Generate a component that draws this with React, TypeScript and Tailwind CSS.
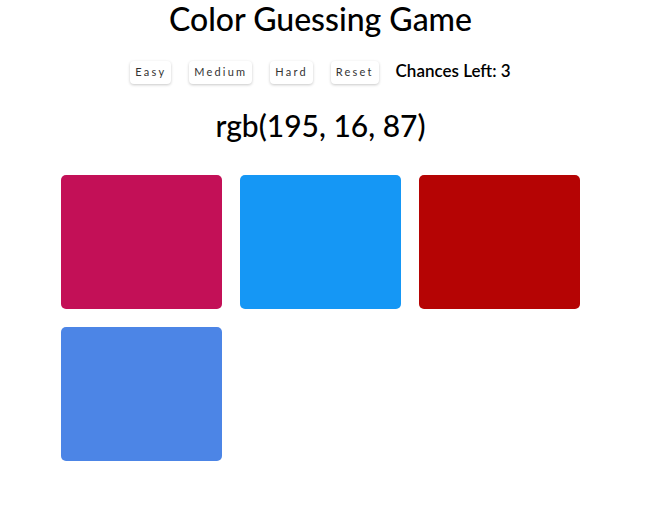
import { useState } from "react"

const colors = ["rgb(195, 16, 87)", "rgb(21, 151, 245)", "rgb(181, 4, 4)", "rgb(76, 133, 230)"]

export default function App() {
  const [chances] = useState(3)

  return (
    <div className="min-h-screen bg-white pt-[1px] font-['Lato',sans-serif] text-black">
      <div className="flex w-[641px] flex-col items-center">
        <h1 className="whitespace-nowrap text-[32px] leading-[36px] font-medium">Color Guessing Game</h1>

        <div className="mt-[24px] flex h-[23px] items-center">
          {["Easy", "Medium", "Hard", "Reset"].map((label) => (
            <button
              key={label}
              className="mr-[18px] h-[23px] rounded-[4px] bg-white px-[5px] text-[11px] tracking-[2.2px] text-[#333] shadow-[0_1px_3px_rgba(0,0,0,0.22)]"
            >
              {label}
            </button>
          ))}
          <span className="-ml-[1px] -mt-[4px] text-[17px] font-semibold">Chances Left: {chances}</span>
        </div>

        <div className="mt-[25px] text-[30px] leading-[32px] font-medium">rgb(195, 16, 87)</div>

        <div className="mt-[34px] grid grid-cols-[161px_161px_161px] gap-[18px]">
          {colors.map((c) => (
            <div key={c} className="h-[134px] rounded-[5px]" style={{ backgroundColor: c }} />
          ))}
        </div>
      </div>
    </div>
  )
}
